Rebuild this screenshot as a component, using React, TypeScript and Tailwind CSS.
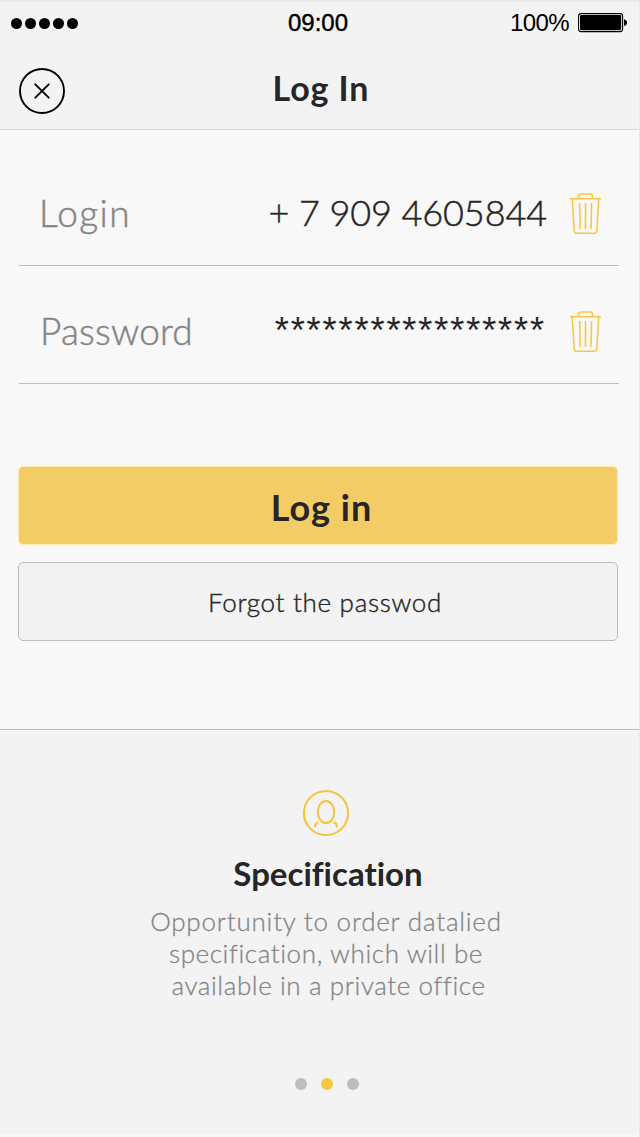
import React from "react";

function TrashIcon() {
  return (
    <svg width="32" height="42" viewBox="0 0 32 42" fill="none" stroke="#f8c744" strokeWidth="1.6">
      <path d="M0 5.7H31" />
      <path d="M8.6 5.5V3.2Q8.6 1 10.8 1H20.2Q22.4 1 22.4 3.2V5.5" />
      <path d="M2.2 6L4.2 37.8Q4.4 40.2 6.6 40.2H24.4Q26.6 40.2 26.8 37.8L28.8 6" />
      <path d="M9.6 10L10.2 36M15.5 10V36M21.6 10L21 36" />
    </svg>
  );
}

function CloseIcon() {
  return (
    <svg width="46" height="46" viewBox="0 0 46 46" fill="none" stroke="#000" strokeWidth="1.9">
      <circle cx="23" cy="23" r="22" />
      <path d="M16.3 16.3L29.7 29.7M29.7 16.3L16.3 29.7" strokeLinecap="round" />
    </svg>
  );
}

function ProfileIcon() {
  return (
    <svg width="48" height="48" viewBox="0 0 48 48" fill="none" stroke="#f6c23c" strokeWidth="2">
      <circle cx="24" cy="24" r="22.1" />
      <ellipse cx="24" cy="23" rx="8.2" ry="11" />
      <path d="M13 38.2C12.9 35.4 13.7 34 16.4 33.2M35 38.2C35.1 35.4 34.3 34 31.6 33.2" />
    </svg>
  );
}

function BatteryIcon() {
  return (
    <svg width="50" height="20" viewBox="0 0 50 20">
      <rect x="0.6" y="0.6" width="44" height="18" rx="2.6" fill="#fff" stroke="#000" strokeWidth="1.1" />
      <rect x="2" y="2" width="41.2" height="15.2" rx="1.4" fill="#000" />
      <path d="M46 6.2Q49 6.8 49 9.6Q49 12.4 46 13Z" fill="#000" />
    </svg>
  );
}

function Field({ label, children }: { label: React.ReactNode; children: React.ReactNode }) {
  return (
    <div className="flex h-[118px] items-start border-b border-[#bdbdbd] pt-11 pr-[17px] leading-10">
      {label}
      <div className="ml-auto">{children}</div>
      <button className="mt-px ml-[23px]" aria-label="Clear">
        <TrashIcon />
      </button>
    </div>
  );
}

export default function App() {
  return (
    <div className="flex h-[1137px] w-[640px] flex-col border-t-2 border-r border-t-[#e9e9e9] border-r-[#e8e8e8] bg-[#f8f8f8] font-['Lato',sans-serif] whitespace-nowrap text-[#262626] [font-variant-ligatures:none]">
      <header className="h-32 border-b border-[#d9d9d9] bg-[#f3f3f3]">
        <div className="grid h-[42px] grid-cols-3 items-center font-['Liberation_Sans',sans-serif] text-2xl text-black">
          <div className="flex gap-[3px] pl-[11px]">
            {[0, 1, 2, 3, 4].map((n) => (
              <span key={n} className="size-[11px] rounded-full bg-black" />
            ))}
          </div>
          <div className="pr-[3px] text-center [-webkit-text-stroke:0.4px_black]">09:00</div>
          <div className="flex items-center justify-end gap-[9px] pr-[11px]">
            <span className="tracking-[-0.6px]">100%</span>
            <BatteryIcon />
          </div>
        </div>
        <div className="grid grid-cols-[64px_1fr_80px] pt-6 pl-[19px]">
          <button className="size-[46px]" aria-label="Close">
            <CloseIcon />
          </button>
          <h1 className="text-center text-[34px] leading-10 font-bold tracking-[0.9px]">Log In</h1>
        </div>
      </header>

      <main className="h-[600px] border-b border-[#bdbdbd] pt-[18px]">
        <div className="mr-5 ml-[19px]">
          <Field
            label={
              <span className="mt-px pl-5 text-[37px] leading-10 font-light tracking-[1.4px] text-[#858585] [-webkit-text-stroke:0.5px_#858585]">
                Login
              </span>
            }
          >
            <span className="text-4xl leading-10 font-light tracking-[-0.1px] [-webkit-text-stroke:0.5px_#262626]">
              + 7 909 4605844
            </span>
          </Field>
          <Field
            label={
              <span className="mt-px pl-[21px] text-[37px] leading-10 font-light tracking-[0.2px] text-[#858585] [-webkit-text-stroke:0.5px_#858585]">
                Password
              </span>
            }
          >
            <span className="block pt-px pr-px font-['Liberation_Sans',sans-serif] text-4xl leading-10 tracking-[1.95px]">
              *****************
            </span>
          </Field>
        </div>
        <div className="mt-[82px] mr-[21px] ml-[18px] flex flex-col gap-[17px]">
          <button className="h-[79px] rounded-[5px] border border-[#fdeeae] bg-[#f3cc65] pt-0.5 pl-[7px] text-4xl leading-10 font-bold tracking-[1px]">
            Log in
          </button>
          <button className="h-[79px] rounded-[5px] border border-[#bdbdbd] bg-[#f3f3f3] pl-[14px] text-[26px] leading-8 font-light tracking-[0.7px] [-webkit-text-stroke:0.4px_#262626]">
            Forgot the passwod
          </button>
        </div>
      </main>

      <footer className="mb-0.5 flex flex-1 flex-col items-center bg-[#f3f3f3] pt-[59px] pl-[13px]">
        <ProfileIcon />
        <h2 className="mt-4 pl-1 text-[33px] leading-10 font-bold">Specification</h2>
        <p className="mt-3 text-center text-[26px] leading-8 font-light tracking-[0.6px] text-[#858585] [-webkit-text-stroke:0.3px_#858585]">
          <span className="block tracking-[0.78px]">Opportunity to order datalied</span>
          <span className="block">specification, which will be</span>
          <span className="block pl-[5px]">available in a private office</span>
        </p>
        <div className="mt-[77px] flex gap-3.5 pl-px">
          <span className="size-3 rounded-full bg-[#bdbdbd]" />
          <span className="size-3 rounded-full bg-[#f8c744]" />
          <span className="size-3 rounded-full bg-[#bdbdbd]" />
        </div>
      </footer>
    </div>
  );
}
